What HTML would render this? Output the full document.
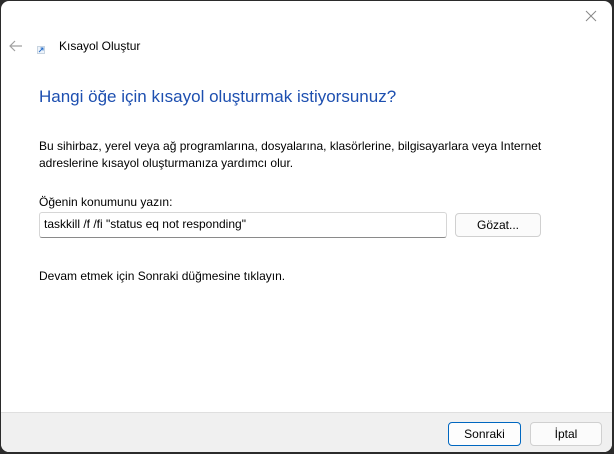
<!DOCTYPE html>
<html><head><meta charset="utf-8"><style>
html,body{margin:0;padding:0;width:614px;height:454px;background:#2b2b2b;overflow:hidden}
body{font-family:"Liberation Sans",sans-serif;font-size:12px;color:#000}
.win{position:absolute;left:1px;top:1px;width:611px;height:451px;background:#fff;border-radius:8px;overflow:hidden}
.abs{position:absolute;white-space:nowrap}
.foot{position:absolute;left:0;top:411px;width:100%;height:40px;background:#f0f0f0;border-top:1px solid #dfdfdf}
.btn{position:absolute;height:22px;border:1px solid #d0d0d0;border-radius:4px;background:#fbfbfb;text-align:center;line-height:22px;font-size:12px}
</style></head><body>
<div class="win">
<svg class="abs" style="left:584px;top:9px" width="12" height="12"><path d="M1 1L11 11M11 1L1 11" stroke="#888" stroke-width="1"/></svg>
<svg class="abs" style="left:8px;top:39px" width="14" height="12"><path d="M13 6H1M6 1L1 6L6 11" stroke="#a0a0a0" stroke-width="1.2" fill="none"/></svg>
<svg class="abs" style="left:36px;top:45px" width="8" height="8"><rect x="0.5" y="0.5" width="7" height="7" fill="#eef4fb" stroke="#c8d4e0"/><path d="M2 6L6 2M3.5 2H6V4.5" stroke="#2a6fc9" stroke-width="1" fill="none"/></svg>
<div class="abs" style="left:58px;top:38px;font-size:12px">Kısayol Oluştur</div>
<div class="abs" style="left:38px;top:86px;font-size:17px;color:#1d4fb0">Hangi öğe için kısayol oluşturmak istiyorsunuz?</div>
<div class="abs" style="left:38px;top:137px;line-height:17px">Bu sihirbaz, yerel veya ağ programlarına, dosyalarına, klasörlerine, bilgisayarlara veya Internet<br>adreslerine kısayol oluşturmanıza yardımcı olur.</div>
<div class="abs" style="left:38px;top:194px">Öğenin konumunu yazın:</div>
<div class="abs" style="left:38px;top:211px;width:405px;height:24px;border:1px solid #d6d6d6;border-bottom:1px solid #8a8a8a;border-radius:3px;line-height:23px;padding-left:4px;box-sizing:border-box;width:408px;height:26px">taskkill /f /fi "status eq not responding"</div>
<div class="btn" style="left:454px;top:212px;width:84px">Gözat...</div>
<div class="abs" style="left:38px;top:268px">Devam etmek için Sonraki düğmesine tıklayın.</div>
<div class="foot"></div>
<div class="btn" style="left:447px;top:421px;width:71px;border:1px solid #0067c0;background:#fdfdfd">Sonraki</div>
<div class="btn" style="left:529px;top:421px;width:70px">İptal</div>
</div>
</body></html>
